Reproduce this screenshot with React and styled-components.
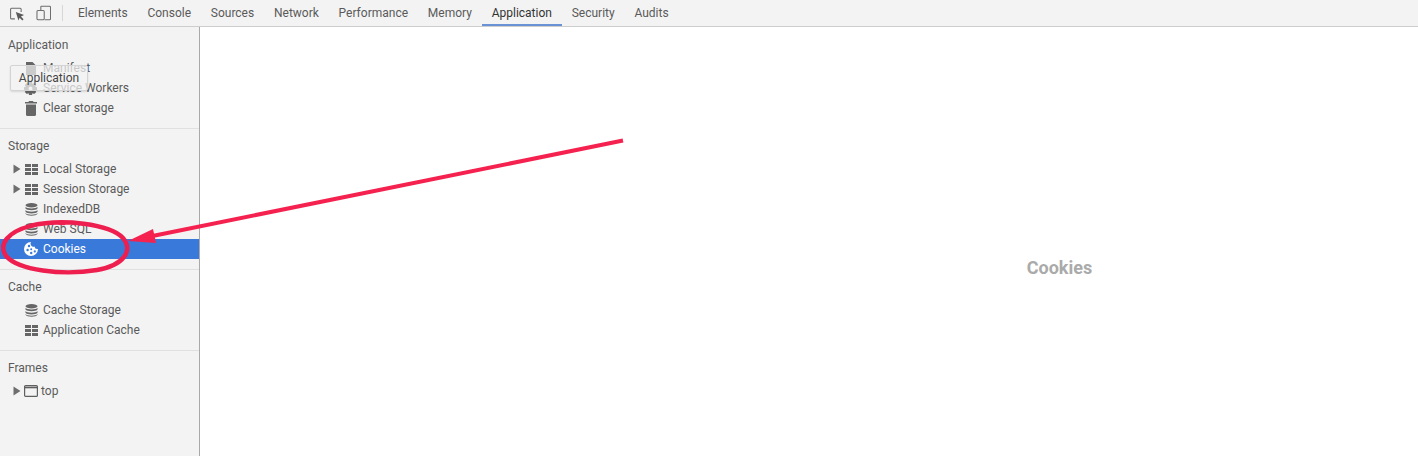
import React from "react";
import styled, { createGlobalStyle } from "styled-components";

const Global = createGlobalStyle`
  html, body { margin: 0; padding: 0; background: #fff; }
  body { font-family: Roboto, "Liberation Sans", sans-serif; font-size: 12px; color: #5a5a5a; }
`;

const Page = styled.div`
  position: relative;
  width: 1418px;
  height: 456px;
  overflow: hidden;
  display: flex;
  flex-direction: column;
`;

const Toolbar = styled.header`
  height: 26px;
  flex: none;
  display: flex;
  align-items: stretch;
  background: #f3f3f3;
  border-bottom: 1px solid #cdcdcd;
`;

const ToolIcons = styled.div`
  display: flex;
  align-items: center;
  gap: 11px;
  padding-left: 10px;
  width: 63px;
  box-sizing: border-box;
`;

const Sep = styled.div`
  width: 1px;
  height: 16px;
  background: #d6d6d6;
`;

const Tabs = styled.nav`
  display: flex;
  margin-left: 5px;
`;

const Tab = styled.div`
  padding: 0 9.9px;
  height: 26px;
  box-sizing: border-box;
  line-height: 26px;
  white-space: nowrap;
  color: ${(p) => (p.$active ? "#333" : "#5a5a5a")};
  border-bottom: 2px solid ${(p) => (p.$active ? "#6a93d6" : "transparent")};
  position: relative;
  z-index: 1;
`;

const Body = styled.div`
  flex: 1;
  display: flex;
  min-height: 0;
`;

const Sidebar = styled.aside`
  width: 199px;
  flex: none;
  background: #f3f3f3;
  border-right: 1px solid #a9a9a9;
`;

const Section = styled.section`
  padding: ${(p) => (p.$first ? "10px" : "9px")} 0 10px;
  border-bottom: ${(p) => (p.$last ? "none" : "1px solid #e0e0e0")};
`;

const SectionTitle = styled.div`
  height: 16px;
  line-height: 16px;
  padding-left: 8px;
  margin-bottom: 5px;
  color: #5a5a5a;
`;

const Row = styled.div`
  height: 20px;
  display: flex;
  align-items: center;
  background: ${(p) => (p.$selected ? "#3879d9" : "transparent")};
  color: ${(p) => (p.$selected ? "#fff" : "#5a5a5a")};
  white-space: nowrap;
`;

const Caret = styled.span`
  width: 12px;
  margin-left: 13px;
  margin-right: -1px;
  flex: none;
  display: flex;
  align-items: center;
`;

const IconSlot = styled.span`
  width: 19px;
  flex: none;
  display: flex;
  align-items: center;
  color: ${(p) => (p.$selected ? "#fff" : "#666")};
`;

const FrameSlot = styled(IconSlot)`
  width: 17px;
`;

const Main = styled.main`
  flex: 1;
  display: flex;
  align-items: center;
  justify-content: center;
  padding: 52px 0 0 501px;
  background: #fff;
`;

const Placeholder = styled.div`
  font-size: 18px;
  font-weight: 700;
  color: #aaa;
`;

const Tooltip = styled.div`
  position: absolute;
  left: 10px;
  top: 65px;
  width: 78px;
  height: 26px;
  box-sizing: border-box;
  background: rgba(243, 243, 243, 0.72);
  border: 1px solid #d4d4d4;
  border-radius: 2px;
  box-shadow: 0 1px 2px rgba(0, 0, 0, 0.12);
  color: #444;
  text-align: center;
  line-height: 24px;
`;

const Annotation = styled.svg`
  position: absolute;
  inset: 0;
  pointer-events: none;
`;

const CaretIcon = () => (
  <svg width="8" height="10" viewBox="0 0 8 10"><path d="M0.5 0.5 L7.5 5 L0.5 9.5 Z" fill="#6e6e6e" /></svg>
);

const GridIcon = () => (
  <svg width="13" height="11" viewBox="0 0 13 11" fill="currentColor" style={{ marginLeft: 1 }}>
    <rect x="0" y="0" width="6" height="3" /><rect x="7" y="0" width="6" height="3" />
    <rect x="0" y="4" width="6" height="3" /><rect x="7" y="4" width="6" height="3" />
    <rect x="0" y="8" width="6" height="3" /><rect x="7" y="8" width="6" height="3" />
  </svg>
);

const DbIcon = () => (
  <svg width="13" height="13" viewBox="0 0 13 13" fill="currentColor" style={{ marginLeft: 1 }}>
    <ellipse cx="6.5" cy="2.3" rx="6" ry="2.2" />
    <path d="M0.5 3.7 C1.5 6 11.5 6 12.5 3.7 V5.6 C11.5 7.8 1.5 7.8 0.5 5.6 Z" />
    <path d="M0.5 7 C1.5 9.2 11.5 9.2 12.5 7 V8.8 C11.5 11 1.5 11 0.5 8.8 Z" />
    <path d="M0.5 10 C1.5 12.2 11.5 12.2 12.5 10 V10.8 C11.5 13.4 1.5 13.4 0.5 10.8 Z" />
  </svg>
);

const FileIcon = () => (
  <svg width="10" height="13" viewBox="0 0 10 13" fill="currentColor" style={{ marginLeft: 2 }}>
    <path d="M0 0 H6.5 L10 3.5 V13 H0 Z" />
  </svg>
);

const GearIcon = () => (
  <svg width="13" height="13" viewBox="0 0 13 13" fill="currentColor">
    <path fillRule="evenodd" d="M5 0 H8 L8.4 1.9 L10.2 1 L12.2 3 L11.2 4.7 L13 5.2 V7.9 L11.2 8.4 L12.2 10.1 L10.2 12.1 L8.4 11.2 L8 13 H5 L4.6 11.2 L2.8 12.1 L0.8 10.1 L1.8 8.4 L0 7.9 V5.2 L1.8 4.7 L0.8 3 L2.8 1 L4.6 1.9 Z M6.5 4.5 A2 2 0 1 0 6.5 8.5 A2 2 0 1 0 6.5 4.5 Z" />
  </svg>
);

const TrashIcon = () => (
  <svg width="12" height="15" viewBox="0 0 12 15" fill="currentColor" style={{ marginLeft: 1 }}>
    <path d="M4 0 H8 L8.6 1 H12 V2.6 H0 V1 H3.4 Z" />
    <path d="M1 3.6 H11 V13.4 Q11 15 9.5 15 H2.5 Q1 15 1 13.4 Z" />
  </svg>
);

const CookieIcon = () => (
  <svg width="14" height="14" viewBox="0 0 14 14">
    <path fill="#fff" d="M7 0 A7 7 0 1 0 14 7 A3 3 0 0 1 10.5 4.5 A3 3 0 0 1 7 0 Z" />
    <circle cx="5" cy="4" r="1.2" fill="#3879d9" />
    <circle cx="3.6" cy="8" r="1.2" fill="#3879d9" />
    <circle cx="7.2" cy="7.2" r="1" fill="#3879d9" />
    <circle cx="7.2" cy="11" r="1.2" fill="#3879d9" />
    <circle cx="10.8" cy="9.4" r="1.1" fill="#3879d9" />
  </svg>
);

const FrameIcon = () => (
  <svg width="14" height="12" viewBox="0 0 14 12" fill="none" stroke="#5f5f5f">
    <rect x="0.6" y="0.6" width="12.8" height="10.8" rx="1" strokeWidth="1.2" />
    <path d="M0.6 2.5 H13.4" strokeWidth="1.6" />
  </svg>
);

const InspectIcon = () => (
  <svg width="15" height="15" viewBox="0 0 15 15" fill="none" style={{ marginTop: 2 }}>
    <path d="M5 12 H1.5 Q0.6 12 0.6 11 V2 Q0.6 1 1.5 1 H10.5 Q11.5 1 11.5 2 V5" stroke="#6e6e6e" strokeWidth="1.1" />
    <path d="M6 5 L14.5 8 L11.3 9.6 L14 12.4 L12.7 13.6 L10 10.8 L8.7 13.8 Z" fill="#5a5a5a" />
  </svg>
);

const DeviceIcon = () => (
  <svg width="16" height="16" viewBox="0 0 16 16" fill="none" stroke="#6e6e6e" strokeWidth="1.1">
    <path d="M5 5 V1.5 Q5 1 5.6 1 H14 Q15 1 15 2 V14 Q15 15 14 15 H9" />
    <rect x="1" y="5.5" width="7.5" height="9.5" rx="1" />
  </svg>
);

const tabs = ["Elements", "Console", "Sources", "Network", "Performance", "Memory", "Application", "Security", "Audits"];

const Item = ({ caret, icon, label, selected, frame }) => {
  const Slot = frame ? FrameSlot : IconSlot;
  return (
    <Row $selected={selected}>
      <Caret>{caret && <CaretIcon />}</Caret>
      <Slot $selected={selected}>{icon}</Slot>
      {label}
    </Row>
  );
};

export default function App() {
  return (
    <Page>
      <Global />
      <Toolbar>
        <ToolIcons>
          <InspectIcon />
          <DeviceIcon />
          <Sep />
        </ToolIcons>
        <Tabs>
          {tabs.map((t) => (
            <Tab key={t} $active={t === "Application"}>{t}</Tab>
          ))}
        </Tabs>
      </Toolbar>
      <Body>
        <Sidebar>
          <Section $first>
            <SectionTitle>Application</SectionTitle>
            <Item icon={<FileIcon />} label="Manifest" />
            <Item icon={<GearIcon />} label="Service Workers" />
            <Item icon={<TrashIcon />} label="Clear storage" />
          </Section>
          <Section>
            <SectionTitle>Storage</SectionTitle>
            <Item caret icon={<GridIcon />} label="Local Storage" />
            <Item caret icon={<GridIcon />} label="Session Storage" />
            <Item icon={<DbIcon />} label="IndexedDB" />
            <Item icon={<DbIcon />} label="Web SQL" />
            <Item selected icon={<CookieIcon />} label="Cookies" />
          </Section>
          <Section>
            <SectionTitle>Cache</SectionTitle>
            <Item icon={<DbIcon />} label="Cache Storage" />
            <Item icon={<GridIcon />} label="Application Cache" />
          </Section>
          <Section $last>
            <SectionTitle>Frames</SectionTitle>
            <Item caret frame icon={<FrameIcon />} label="top" />
          </Section>
        </Sidebar>
        <Main>
          <Placeholder>Cookies</Placeholder>
        </Main>
      </Body>
      <Tooltip>Application</Tooltip>
      <Annotation width="1418" height="456" viewBox="0 0 1418 456">
        <path d="M623 140.5 L150 236.5" stroke="#f5224f" strokeWidth="4" fill="none" />
        <path d="M128 241 L153 229 L156 243 Z" fill="#f5224f" />
        <path d="M30 226 C62 218 110 224 123 238 C133 250 125 265 97 270 C62 276 18 270 6 256 C-2 244 8 232 30 226 C44 223 54 222 64 223" stroke="#ee1f4f" strokeWidth="4.4" fill="none" strokeLinecap="round" />
      </Annotation>
    </Page>
  );
}
